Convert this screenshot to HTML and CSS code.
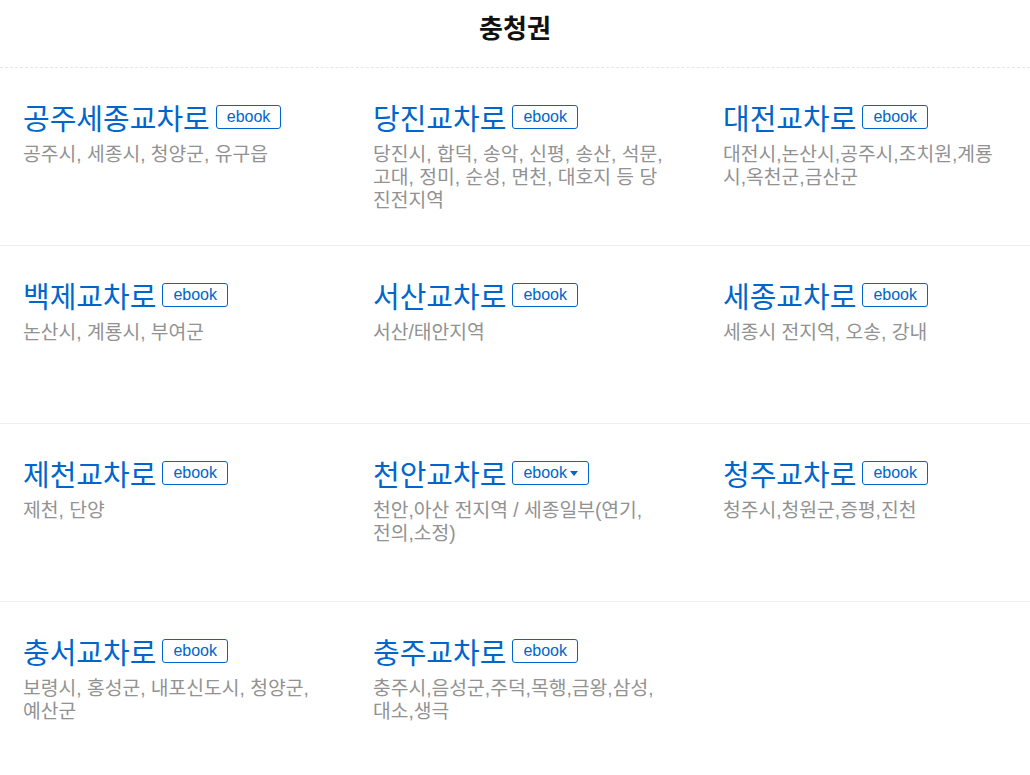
FILE: index.html
```html
<!DOCTYPE html>
<html lang="ko">
<head>
  <meta charset="UTF-8" />
  <meta name="viewport" content="width=device-width, initial-scale=1.0"/>
  <title>충청권 교차로</title>
  <link rel="stylesheet" href="styles.css">
</head>
<body>
  <header class="region-title">충청권</header>

  <div class="paper-list">
    <div class="paper-row">
      <div class="paper">
        <div class="paper-head">
          <a class="paper-name" href="#">공주세종교차로</a>
          <a class="ebook" href="#">ebook</a>
        </div>
        <p class="paper-area">공주시, 세종시, 청양군, 유구읍</p>
      </div>
      <div class="paper">
        <div class="paper-head">
          <a class="paper-name" href="#">당진교차로</a>
          <a class="ebook" href="#">ebook</a>
        </div>
        <p class="paper-area">당진시, 합덕, 송악, 신평, 송산, 석문, 고대, 정미, 순성, 면천, 대호지 등 당진전지역</p>
      </div>
      <div class="paper">
        <div class="paper-head">
          <a class="paper-name" href="#">대전교차로</a>
          <a class="ebook" href="#">ebook</a>
        </div>
        <p class="paper-area">대전시,논산시,공주시,조치원,계룡시,옥천군,금산군</p>
      </div>
    </div>

    <div class="paper-row">
      <div class="paper">
        <div class="paper-head">
          <a class="paper-name" href="#">백제교차로</a>
          <a class="ebook" href="#">ebook</a>
        </div>
        <p class="paper-area">논산시, 계룡시, 부여군</p>
      </div>
      <div class="paper">
        <div class="paper-head">
          <a class="paper-name" href="#">서산교차로</a>
          <a class="ebook" href="#">ebook</a>
        </div>
        <p class="paper-area">서산/태안지역</p>
      </div>
      <div class="paper">
        <div class="paper-head">
          <a class="paper-name" href="#">세종교차로</a>
          <a class="ebook" href="#">ebook</a>
        </div>
        <p class="paper-area">세종시 전지역, 오송, 강내</p>
      </div>
    </div>

    <div class="paper-row">
      <div class="paper">
        <div class="paper-head">
          <a class="paper-name" href="#">제천교차로</a>
          <a class="ebook" href="#">ebook</a>
        </div>
        <p class="paper-area">제천, 단양</p>
      </div>
      <div class="paper">
        <div class="paper-head">
          <a class="paper-name" href="#">천안교차로</a>
          <a class="ebook has-menu" href="#">ebook<span class="caret"></span></a>
        </div>
        <p class="paper-area">천안,아산 전지역 / 세종일부(연기,<br>전의,소정)</p>
      </div>
      <div class="paper">
        <div class="paper-head">
          <a class="paper-name" href="#">청주교차로</a>
          <a class="ebook" href="#">ebook</a>
        </div>
        <p class="paper-area">청주시,청원군,증평,진천</p>
      </div>
    </div>

    <div class="paper-row">
      <div class="paper">
        <div class="paper-head">
          <a class="paper-name" href="#">충서교차로</a>
          <a class="ebook" href="#">ebook</a>
        </div>
        <p class="paper-area">보령시, 홍성군, 내포신도시, 청양군, 예산군</p>
      </div>
      <div class="paper">
        <div class="paper-head">
          <a class="paper-name" href="#">충주교차로</a>
          <a class="ebook" href="#">ebook</a>
        </div>
        <p class="paper-area">충주시,음성군,주덕,목행,금왕,삼성,대소,생극</p>
      </div>
    </div>
  </div>
</body>
</html>
```

FILE: styles.css
```css
body {
  margin: 0;
  font-family: "Liberation Sans", "Noto Sans CJK KR", sans-serif;
  background: #fff;
  color: #222;
  overflow: hidden;
}
.region-title {
  padding: 12px 0 21px;
  line-height: 34px;
  font-size: 26px;
  font-weight: bold;
  text-align: center;
  color: #111;
  border-bottom: 1px dashed #e6e6e6;
}
.paper-row {
  display: flex;
  height: 177px;
  border-bottom: 1px solid #eeeeee;
}
.paper {
  flex: 0 0 350px;
  box-sizing: border-box;
  padding: 30px 0 0 23px;
}
.paper-head {
  display: flex;
  align-items: center;
  height: 38px;
}
.paper-name {
  font-size: 29px;
  color: #0066cc;
  text-decoration: none;
}
.ebook {
  display: inline-flex;
  align-items: center;
  height: 22px;
  margin-left: 6px;
  padding: 0 10px;
  border: 1px solid #0066cc;
  border-radius: 3px;
  font-size: 16px;
  color: #0066cc;
  text-decoration: none;
}
.caret {
  width: 0;
  height: 0;
  margin-left: 3px;
  border-left: 4px solid transparent;
  border-right: 4px solid transparent;
  border-top: 5px solid #0066cc;
}
.paper-area {
  width: 291px;
  margin: 7px 0 0;
  font-size: 19.3px;
  line-height: 23px;
  color: #929292;
}
```
